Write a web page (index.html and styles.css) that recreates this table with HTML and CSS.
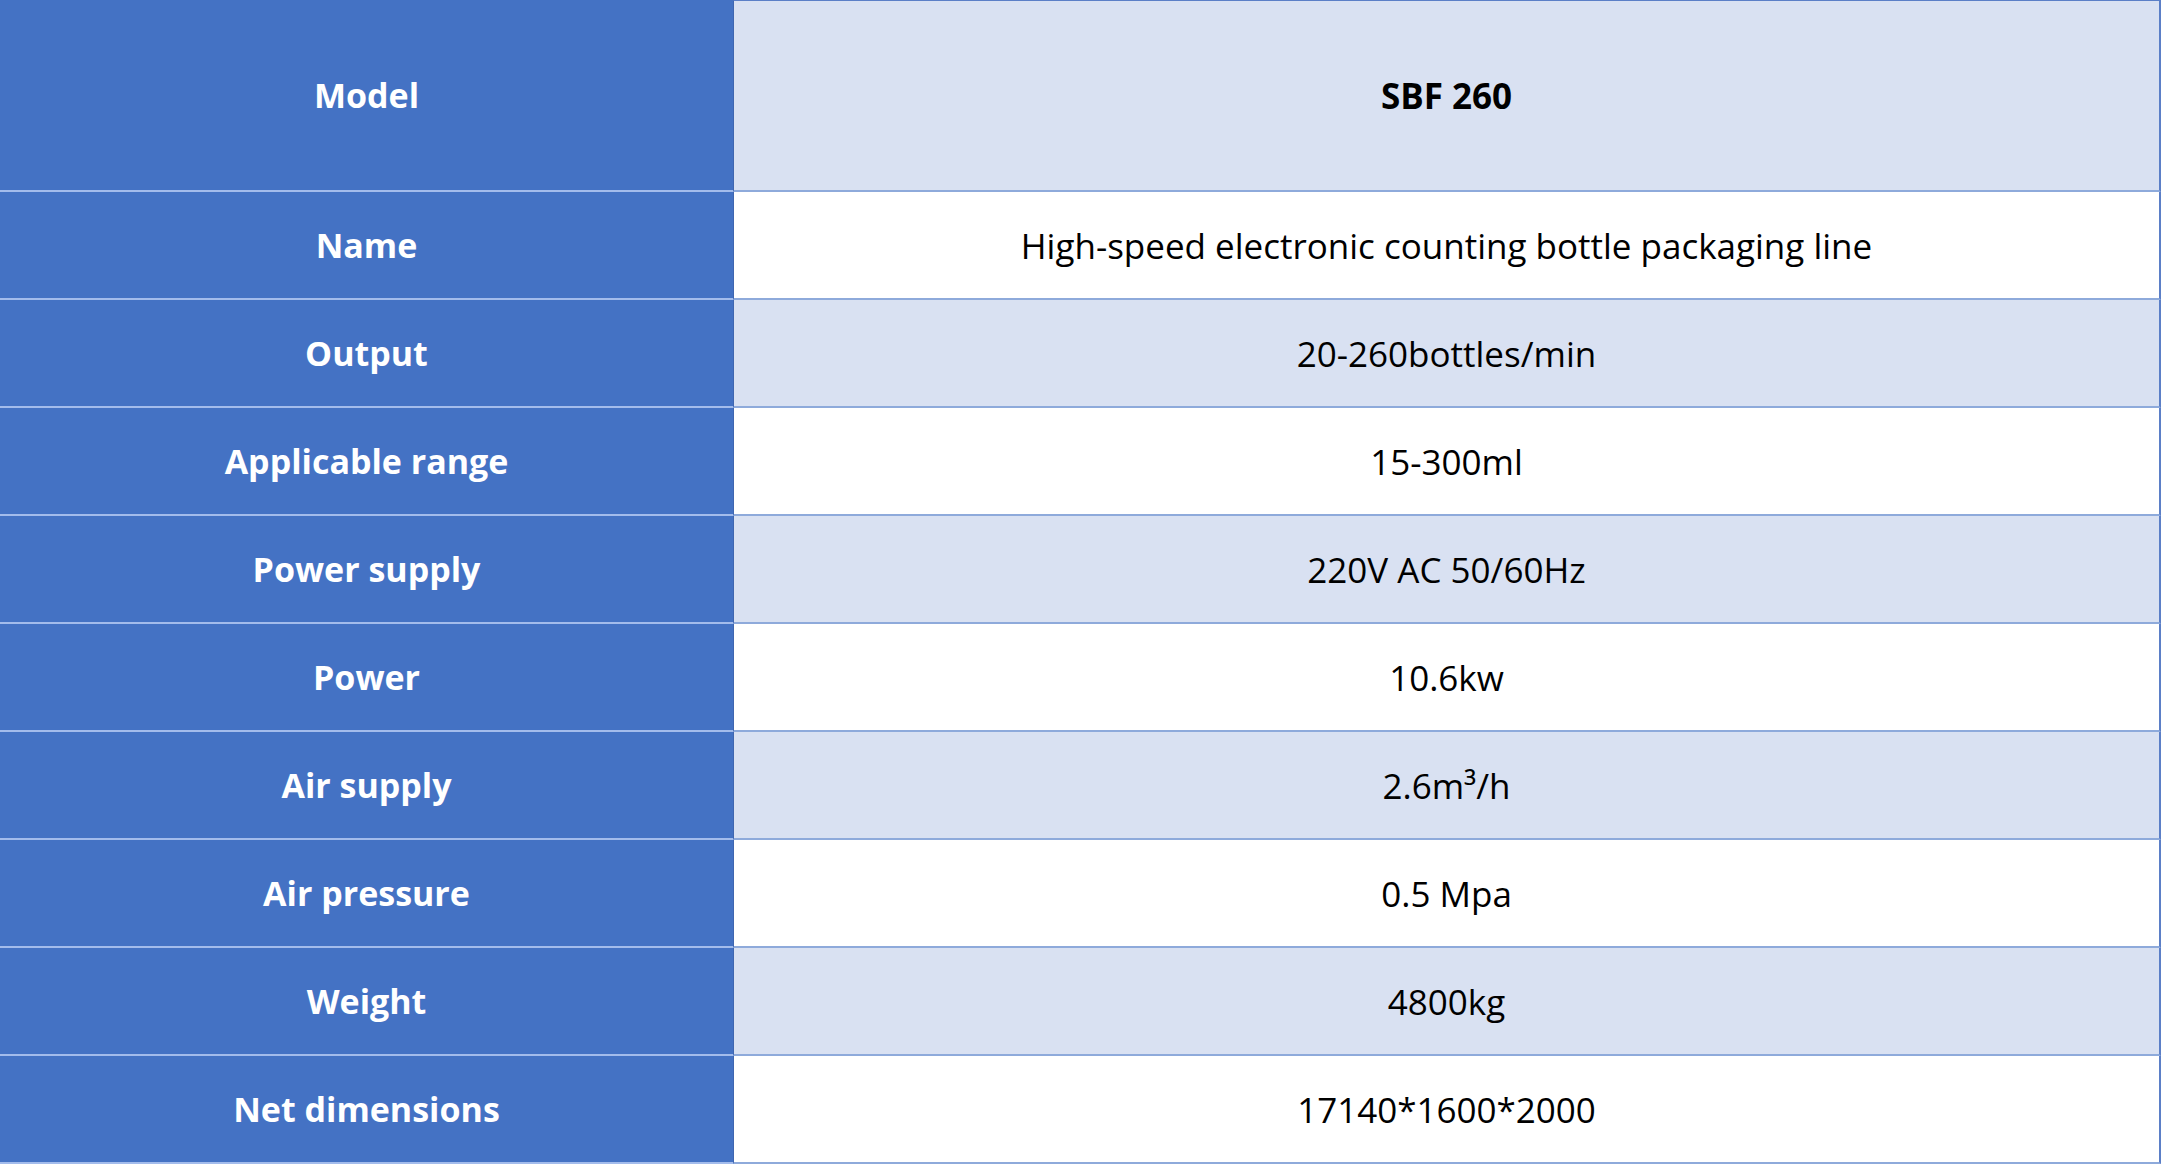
FILE: index.html
```html
<!DOCTYPE html>
<html lang="en">
<head>
<meta charset="utf-8">
<title>SBF 260</title>
<link rel="stylesheet" href="styles.css">
</head>
<body>
<div class="spec">
  <div class="row head"><div class="key">Model</div><div class="val shade">SBF 260</div></div>
  <div class="row"><div class="key">Name</div><div class="val">High-speed electronic counting bottle packaging line</div></div>
  <div class="row"><div class="key">Output</div><div class="val shade">20-260bottles/min</div></div>
  <div class="row"><div class="key">Applicable range</div><div class="val">15-300ml</div></div>
  <div class="row"><div class="key">Power supply</div><div class="val shade">220V AC 50/60Hz</div></div>
  <div class="row"><div class="key">Power</div><div class="val">10.6kw</div></div>
  <div class="row"><div class="key">Air supply</div><div class="val shade">2.6m³/h</div></div>
  <div class="row"><div class="key">Air pressure</div><div class="val">0.5 Mpa</div></div>
  <div class="row"><div class="key">Weight</div><div class="val shade">4800kg</div></div>
  <div class="row"><div class="key">Net dimensions</div><div class="val">17140*1600*2000</div></div>
</div>
</body>
</html>
```
FILE: styles.css
```css
html, body {
  margin: 0;
  padding: 0;
  background: #ffffff;
}
.spec {
  display: flex;
  flex-direction: column;
  width: 2161px;
  font-family: "Open Sans", "Noto Sans", "Liberation Sans", sans-serif;
}
.row {
  display: grid;
  grid-template-columns: 733px 1fr;
  height: 108px;
}
.row.head {
  height: 192px;
}
.key, .val {
  display: flex;
  align-items: center;
  justify-content: center;
  box-sizing: border-box;
  border-bottom: 2px solid #a3bcec;
}
.key {
  background: #4472c4;
  color: #ffffff;
  font-weight: 700;
  font-size: 34px;
}
.val {
  background: #ffffff;
  color: #000000;
  font-size: 35px;
  border-bottom-color: #8eaadb;
  border-right: 2px solid #5b7fc7;
  border-left: 1px solid #3f66b0;
}
.val.shade {
  background: #d9e1f2;
}
.head .val {
  font-weight: 700;
  border-top: 1px solid #5b7fc7;
}
```
